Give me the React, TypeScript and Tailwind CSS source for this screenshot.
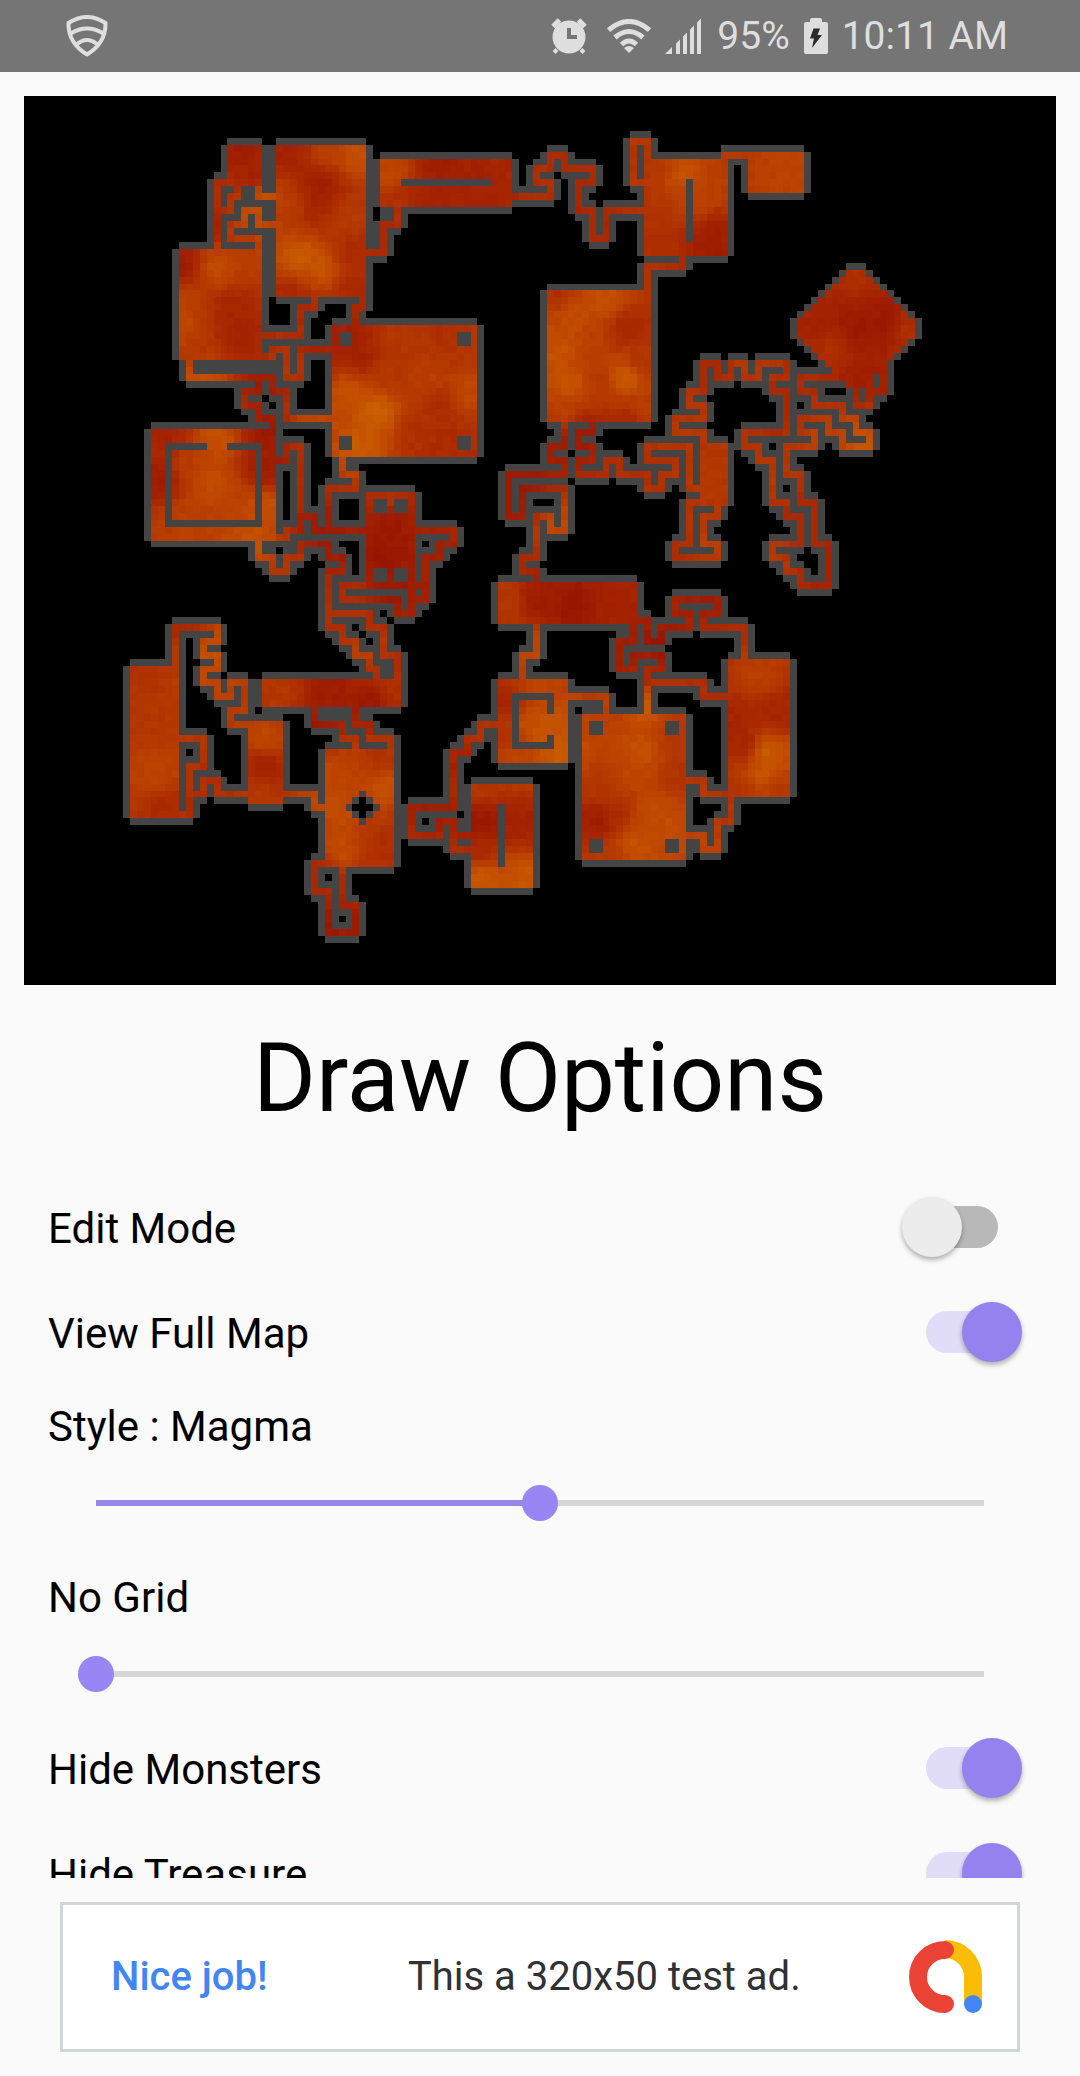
import { useState } from "react"

const GRID = 128

// [col, row, width, height]
const rooms = [
  [19, 7, 5, 5], [17, 12, 7, 1], [12, 22, 12, 16], [26, 7, 13, 22], [41, 9, 19, 7],
  [34, 33, 21, 19], [8, 48, 18, 16], [39, 57, 7, 13], [24, 84, 20, 4], [5, 82, 7, 22],
  [22, 90, 5, 12], [33, 94, 10, 17], [54, 99, 9, 15], [58, 84, 10, 12], [70, 89, 15, 21],
  [91, 81, 9, 20], [58, 70, 20, 6], [87, 50, 4, 9], [79, 9, 12, 14], [94, 8, 8, 6],
  [65, 28, 15, 19],
]

const pillars = [
  [44, 12, 13, 1], [85, 12, 1, 9], [58, 102, 1, 9],
  [35, 34, 2, 2], [52, 34, 2, 2], [35, 49, 2, 2], [52, 49, 2, 2],
  [40, 58, 2, 2], [43, 58, 2, 2], [40, 68, 2, 2], [43, 68, 2, 2],
  [71, 90, 2, 2], [82, 90, 2, 2], [71, 107, 2, 2], [82, 107, 2, 2],
  [10, 50, 6, 1], [19, 50, 5, 1], [10, 50, 1, 12], [23, 50, 1, 12], [10, 61, 14, 1],
  [60, 86, 6, 1], [60, 86, 1, 8], [60, 93, 6, 1], [65, 86, 1, 3], [65, 92, 1, 2],
]

// corridors, one cell wide, as corner points
const corridors = [
  "20,12 20,14 19,14 19,16 17,16",
  "17,12 17,22",
  "23,12 23,14 26,14",
  "26,18 23,18 23,16 21,16 21,18 19,18 19,20 23,20 23,22",
  "43,15 43,18 41,18 41,22 38,22",
  "31,28 31,30 29,30 29,34 23,34",
  "38,28 38,30 37,30 37,33",
  "23,37 25,37 25,36 27,36 27,40 29,40 29,36 34,36",
  "13,37 13,40 25,40 25,42 27,42 27,46 34,46",
  "23,40 23,42 21,42 21,44 23,44 23,46 25,46 25,48",
  "25,52 27,52 27,50 29,50 29,62 27,62 27,63 25,63",
  "29,60 31,60 31,62 39,62",
  "33,62 33,56 37,56 37,54 35,54 35,51",
  "45,62 51,62 51,64 49,64 49,66 47,66 47,72 45,72",
  "47,70 35,70 35,72 43,72 43,74 45,74 45,70",
  "23,63 23,66 25,66 25,68 27,68 27,66 29,66 29,64 33,64 33,66 35,66 35,68 33,68 33,76 35,76 35,78 37,78 37,80 39,80 39,82 40,82 40,84",
  "33,74 39,74 39,76 41,76 41,80 43,80 43,84",
  "11,82 11,76 17,76 17,78 15,78 15,80 17,80 17,82 15,82 15,84 17,84 17,86 19,86 19,84 21,84 21,88 19,88 19,90 22,90",
  "11,92 15,92 15,96 13,96 13,103 11,103",
  "13,100 15,100 15,98 17,98 17,100 22,100",
  "26,100 31,100 31,102 33,102",
  "31,87 31,90 35,90 35,92 37,92 37,94",
  "37,87 37,90 39,90 39,92 42,92 42,94",
  "33,110 31,110 31,114 33,114 33,120 37,120 37,116 35,116 35,110",
  "54,106 51,106 51,104 49,104 49,106 45,106 45,102 51,102 51,94 53,94 53,92 55,92 55,90 58,90",
  "51,106 51,108 54,108",
  "67,86 73,86 73,89",
  "79,89 79,84 87,84 87,86 91,86",
  "63,75 63,80 61,80 61,84",
  "77,75 79,75 79,78 81,78 81,76 85,76 85,74 83,74 83,72 89,72 89,74 87,74 87,76 93,76 93,81",
  "77,75 77,78 75,78 75,82 77,82 77,80 81,80 81,82 79,82 79,84",
  "84,98 87,98 87,100 91,100",
  "91,100 91,104 89,104 89,108 87,108 87,106 84,106",
  "63,70 63,68 61,68 61,66 63,66 63,60 65,60 65,62 67,62 67,56 61,56 61,60 59,60 59,54 67,54 67,52 65,52 65,50 67,50 67,46",
  "71,46 71,48 69,48 69,50 71,50 71,52 69,52 69,54 73,54 73,52 75,52 75,54 79,54 79,56 81,56 81,54 83,54 83,52 79,52 79,50 85,50 85,56 87,56",
  "89,58 89,60 87,60 87,64 89,64 89,66 83,66 83,64 85,64 85,58 87,58",
  "87,50 87,48 83,48 83,46 87,46 87,44 85,44 85,42 87,42 87,38 89,38 89,40 91,40 91,38 93,38 93,40 95,40 95,38 99,38 99,40 97,40 97,42 99,42 99,48 93,48 93,50 95,50 95,52 97,52 97,58 99,58 99,60 101,60 101,64 97,64 97,66 99,66 99,68 101,68 101,70 105,70 105,64 103,64 103,58 101,58 101,54 99,54 99,50 103,50 103,48 101,48 101,46 105,46 105,48 107,48 107,50 111,50 111,48 109,48 109,46 107,46 107,44 103,44 103,42 101,42 101,40 107,40",
  "113,37 113,42 111,42 111,44 109,44 109,40",
  "111,42 111,40",
  "94,8 90,8 90,9",
  "79,9 79,6 77,6 77,12 79,12",
  "59,14 65,14 65,12 63,12 63,10 65,10 65,8 67,8 67,10 71,10 71,12 69,12 69,16 71,16 71,20 73,20 73,16 79,16",
  "84,22 84,24 79,24 79,28",
]

// [col, row, heat]
const heatPoints = [
  [20, 7, 0.1], [22, 11, 0.2], [17, 18, 0.2], [22, 17, 0.8], [24, 14, 0.8], [20, 19, 0.5],
  [12, 24, 0.1], [17, 24, 0.75], [20, 22, 0.6], [13, 29, 0.6], [19, 30, 0.25], [12, 33, 0.7], [20, 34, 0.2], [14, 36, 0.5],
  [27, 8, 0.2], [33, 8, 0.6], [37, 8, 0.8], [32, 12, 0.1], [28, 15, 0.55], [31, 15, 0.2], [36, 17, 0.55], [29, 23, 0.9], [32, 24, 0.85], [36, 22, 0.35], [37, 27, 0.3], [28, 28, 0.3],
  [42, 11, 0.7], [49, 9, 0.1], [54, 11, 0.2], [47, 14, 0.2], [58, 12, 0.25], [43, 14, 0.4],
  [68, 9, 0.35], [64, 13, 0.4], [70, 15, 0.3], [73, 19, 0.3], [41, 20, 0.3], [15, 40, 0.8], [24, 41, 0.1], [27, 38, 0.5], [32, 36, 0.2], [31, 46, 0.7],
  [80, 10, 0.5], [84, 11, 0.8], [80, 17, 0.45], [89, 12, 0.6], [86, 15, 0.65], [88, 19, 0.15], [88, 21, 0.1], [81, 21, 0.4],
  [92, 8, 0.5], [97, 9, 0.65], [100, 11, 0.65],
  [66, 28, 0.4], [73, 29, 0.8], [68, 31, 0.75], [76, 33, 0.3], [66, 36, 0.8], [71, 37, 0.6], [78, 38, 0.45], [76, 40, 0.95], [68, 41, 0.85], [72, 41, 0.5], [76, 46, 0.3], [67, 45, 0.6], [78, 44, 0.6], [70, 48, 0.05],
  [36, 34, 0.15], [38, 37, 0.2], [43, 34, 0.5], [50, 34, 0.4], [53, 36, 0.5], [42, 39, 0.5], [36, 42, 0.8], [40, 45, 0.95], [47, 40, 0.6], [49, 44, 0.35], [53, 42, 0.7], [38, 50, 0.9], [46, 48, 0.4], [50, 50, 0.35],
  [109, 25, 0.4], [109, 33, 0.05], [113, 32, 0.05], [103, 33, 0.2], [117, 33, 0.4], [105, 36, 0.4], [110, 40, 0.15],
  [88, 50, 0.5], [88, 55, 0.5], [83, 45, 0.5], [97, 44, 0.3], [110, 49, 0.8], [105, 50, 0.6], [97, 55, 0.5], [101, 60, 0.3], [105, 67, 0.2], [97, 65, 0.5], [88, 64, 0.6], [84, 65, 0.4], [95, 38, 0.5], [87, 38, 0.3],
  [10, 49, 0.2], [9, 55, 0.1], [17, 49, 0.8], [16, 55, 0.75], [24, 48, 0.05], [24, 53, 0.1], [20, 59, 0.65], [12, 60, 0.6], [24, 59, 0.8], [12, 63, 0.6], [22, 63, 0.8], [13, 52, 0.6],
  [42, 57, 0.4], [42, 61, 0.05], [41, 66, 0], [42, 71, 0.05], [50, 63, 0.2], [36, 72, 0.4], [31, 61, 0.1], [28, 68, 0.5], [33, 65, 0.1], [35, 76, 0.4], [38, 79, 0.6], [43, 82, 0.4],
  [26, 85, 0.5], [33, 85, 0.1], [39, 87, 0.05], [43, 85, 0.4],
  [8, 83, 0.45], [6, 90, 0.5], [8, 97, 0.65], [10, 102, 0.35], [11, 88, 0.5], [16, 79, 0.8], [15, 84, 0.7], [13, 76, 0.3], [17, 98, 0.4],
  [24, 92, 0.7], [24, 96, 0.2], [23, 100, 0.5], [31, 91, 0.05],
  [34, 97, 0.7], [37, 96, 0.6], [34, 102, 0.75], [41, 99, 0.8], [40, 95, 0.45], [35, 108, 0.75], [40, 108, 0.4], [31, 111, 0.3], [33, 119, 0.05], [37, 119, 0.1], [35, 114, 0.3],
  [55, 99, 0.5], [55, 104, 0], [61, 104, 0.2], [55, 108, 0.3], [55, 112, 0.9], [61, 112, 0.85], [47, 102, 0.1], [51, 95, 0.2],
  [59, 87, 0.25], [63, 85, 0.65], [62, 90, 0.8], [65, 90, 0.85], [59, 92, 0.4], [66, 94, 0.9], [60, 95, 0.7],
  [58, 72, 0.5], [64, 72, 0.1], [68, 73, 0], [74, 73, 0.2], [63, 79, 0.7], [76, 80, 0.1], [81, 79, 0], [79, 83, 0.3], [88, 71, 0.1], [93, 76, 0.4],
  [72, 89, 0.6], [79, 87, 0.9], [78, 94, 0.8], [73, 99, 0.5], [77, 97, 0.7], [83, 97, 0.45], [79, 103, 0.75], [72, 104, 0.1], [75, 103, 0.35], [81, 104, 0.75], [73, 109, 0.5], [77, 107, 0.8], [83, 92, 0.5],
  [95, 83, 0.6], [92, 89, 0.25], [93, 93, 0.2], [96, 94, 0.95], [96, 97, 0.85], [98, 88, 0.25], [98, 99, 0.5], [92, 100, 0.45],
  [61, 55, 0.05], [66, 50, 0.1], [66, 61, 0.7], [60, 59, 0.1], [75, 53, 0.4],
]

function buildFloor() {
  const floor: boolean[][] = Array.from({ length: GRID }, () => Array(GRID).fill(false))
  const fill = ([x, y, w, h]: number[], value: boolean) => {
    for (let r = y; r < y + h; r++) for (let c = x; c < x + w; c++) floor[r][c] = value
  }

  rooms.forEach((room) => fill(room, true))

  // diamond room
  for (let dy = -8; dy <= 8; dy++) {
    const half = Math.min(8, 9 - Math.abs(dy))
    fill([109 - half, 33 + dy, half * 2 + 1, 1], true)
  }

  corridors.forEach((corridor) => {
    const points = corridor.split(" ").map((p) => p.split(",").map(Number))
    for (let i = 1; i < points.length; i++) {
      const [ax, ay] = points[i - 1]
      const [bx, by] = points[i]
      fill([Math.min(ax, bx), Math.min(ay, by), Math.abs(ax - bx) + 1, Math.abs(ay - by) + 1], true)
    }
  })

  pillars.forEach((pillar) => fill(pillar, false))

  // pit
  for (let dy = -2; dy <= 2; dy++) {
    const half = 2 - Math.abs(dy)
    fill([38 - half, 102 + dy, half * 2 + 1, 1], false)
  }
  return floor
}

function magma(col: number, row: number) {
  let sum = 0
  let total = 0
  for (const [x, y, heat] of heatPoints) {
    const weight = 1 / Math.pow((x - col) ** 2 + (y - row) ** 2 + 2, 1.7)
    sum += heat * weight
    total += weight
  }
  const noise = Math.sin(col * 12.9898 + row * 78.233) * 43758.5453
  const heat = Math.max(0, Math.min(1, 0.04 + sum / total + (noise - Math.floor(noise) - 0.5) * 0.08))
  const step = Math.round(heat * 24) / 24
  return `rgb(${Math.round(150 + step * 54)}, ${Math.round(20 + step * 50 + step * step * 26)}, 0)`
}

const floor = buildFloor()

const cells: { col: number; row: number; fill: string }[] = []
for (let row = 0; row < GRID; row++) {
  for (let col = 0; col < GRID; col++) {
    if (floor[row][col]) {
      cells.push({ col, row, fill: magma(col, row) })
    } else if (floor[row - 1]?.[col] || floor[row + 1]?.[col] || floor[row][col - 1] || floor[row][col + 1]) {
      cells.push({ col, row, fill: "#444444" })
    }
  }
}

function DungeonMap() {
  return (
    <div className="bg-black aspect-[1032/889]">
      <svg viewBox={`0 0 ${GRID} ${GRID}`} className="block w-full h-full" shapeRendering="crispEdges" role="img" aria-label="Map">
        {cells.map(({ col, row, fill }) => (
          <rect key={`${col}-${row}`} x={col} y={row} width={1} height={1} fill={fill} />
        ))}
      </svg>
    </div>
  )
}

function StatusBar() {
  return (
    <header className="flex items-center justify-between h-[72px] shrink-0 bg-[#757575] text-[#dedede] pl-[66px] pr-[72px]">
      <svg width="42" height="42" viewBox="0 0 42 42" fill="none" stroke="currentColor" strokeWidth="4" strokeLinejoin="round">
        <path d="M2.5 8 Q21 -4 39.5 8 Q40 28 21 39.5 Q2 28 2.5 8Z" />
        <path d="M4.5 18.5 Q21 8.5 37.5 18.5" />
        <path d="M10.5 29.5 Q21 20.5 31.5 29.5" />
      </svg>
      <div className="flex items-center gap-[14px] text-[39px] leading-none">
        <svg width="42" height="36" viewBox="0 0 42 36" fill="currentColor">
          <circle cx="18" cy="19" r="16.5" />
          <path d="M2 8.5 8.5 2M27.5 2 34 8.5" stroke="currentColor" strokeWidth="5" />
          <path d="M6 31.5 3 34.5M30 31.5 33 34.5" stroke="currentColor" strokeWidth="4" />
          <path d="M18 10v9h8" fill="none" stroke="#757575" strokeWidth="4" />
        </svg>
        <svg width="44" height="34" viewBox="0 0 44 34" fill="none" stroke="currentColor" strokeWidth="5">
          <path d="M1.5 11 Q22 -6 42.5 11" />
          <path d="M8 18.5 Q22 6.5 36 18.5" />
          <path d="M14.5 25.5 Q22 18.5 29.5 25.5" />
          <path d="M17 29 Q22 25 27 29 L22 34Z" fill="currentColor" stroke="none" />
        </svg>
        <svg width="38" height="36" viewBox="0 0 38 36" fill="currentColor">
          <path d="M0 36 7 29V36ZM11 25.5 15 21.5V36H11ZM18 18.5 22 14.5V36H18ZM25 11.5 29 7.5V36H25ZM32 4.5 36 .5V36H32Z" />
        </svg>
        <span>95%</span>
        <svg width="24" height="36" viewBox="0 0 24 36" fill="currentColor">
          <path d="M6 4V2Q6 0 8 0H16Q18 0 18 2V4H22Q24 4 24 6V34Q24 36 22 36H2Q0 36 0 34V6Q0 4 2 4Z" />
          <path d="M9.5 10.5H16L13.5 17H18L8 30 10 20.5H6Z" fill="#2b2b2b" />
        </svg>
        <span>10:11 AM</span>
      </div>
    </header>
  )
}

function SwitchRow({ label, initial }: { label: string; initial: boolean }) {
  const [on, setOn] = useState(initial)
  return (
    <label className="flex items-center justify-between h-[105px] pl-12 pr-[58px]">
      <span className="pt-1">{label}</span>
      <input
        type="checkbox"
        role="switch"
        checked={on}
        onChange={(e) => setOn(e.target.checked)}
        className="appearance-none relative w-[120px] h-[60px] before:absolute before:left-6 before:top-[9px] before:w-[72px] before:h-[42px] before:rounded-full before:bg-[#b8b8b8] checked:before:bg-[#e1dcf8] after:absolute after:left-0 after:top-0 after:w-[60px] after:h-[60px] after:rounded-full after:bg-[#ececec] after:shadow-[0_3px_5px_rgba(0,0,0,0.3)] checked:after:left-[60px] checked:after:bg-[#9682ee]"
      />
    </label>
  )
}

function SliderRow({ label, initial, max }: { label: string; initial: number; max: number }) {
  const [value, setValue] = useState(initial)
  const percent = (value / max) * 100
  return (
    <label className="block">
      <span className="block pt-2 pl-12 leading-[70px]">{label}</span>
      <span className="block px-[78px]">
        <input
          type="range"
          min={0}
          max={max}
          value={value}
          onChange={(e) => setValue(Number(e.target.value))}
          style={{ backgroundImage: `linear-gradient(to right, #9a88e8 ${percent}%, #d6d6d6 ${percent}%)` }}
          className="block appearance-none w-full h-[82px] bg-no-repeat bg-center bg-[length:calc(100%-36px)_6px] [&::-webkit-slider-thumb]:appearance-none [&::-webkit-slider-thumb]:w-9 [&::-webkit-slider-thumb]:h-9 [&::-webkit-slider-thumb]:rounded-full [&::-webkit-slider-thumb]:bg-[#9985f4]"
        />
      </span>
    </label>
  )
}

function AdBanner() {
  return (
    <footer className="shrink-0 px-[60px] py-6">
      <a href="#" className="flex items-center justify-between h-[150px] bg-white border-3 border-[#d0d7db] pl-12 pr-[34px]">
        <span className="text-[40px] font-medium text-[#4285f4]">Nice job!</span>
        <span className="text-[40px] text-[#303134] pl-8">This a 320x50 test ad.</span>
        <svg width="74" height="74" viewBox="0 0 74 74" fill="none" strokeWidth="18">
          <path d="M36 9A28 28 0 0 1 64 37V64" stroke="#fbbc04" />
          <path d="M36 10A27 27 0 0 0 36 64" stroke="#ea4335" strokeLinecap="round" />
          <circle cx="64" cy="64" r="9" fill="#4285f4" />
        </svg>
      </a>
    </footer>
  )
}

export default function App() {
  return (
    <div className="flex flex-col h-screen bg-[#fafafa] text-black font-[Roboto,sans-serif]">
      <StatusBar />
      <main className="flex-1 min-h-0 overflow-hidden">
        <div className="px-6 pt-6">
          <DungeonMap />
        </div>

        <h1 className="text-center text-[96px] leading-[112px] pt-[37px] pb-10">Draw Options</h1>

        <div className="text-[42px]">
          <SwitchRow label="Edit Mode" initial={false} />
          <SwitchRow label="View Full Map" initial={true} />
          <div className="flex flex-col gap-[11px]">
            <SliderRow label="Style : Magma" initial={4} max={8} />
            <SliderRow label="No Grid" initial={0} max={4} />
          </div>
          <SwitchRow label="Hide Monsters" initial={true} />
          <SwitchRow label="Hide Treasure" initial={true} />
        </div>
      </main>
      <AdBanner />
    </div>
  )
}
